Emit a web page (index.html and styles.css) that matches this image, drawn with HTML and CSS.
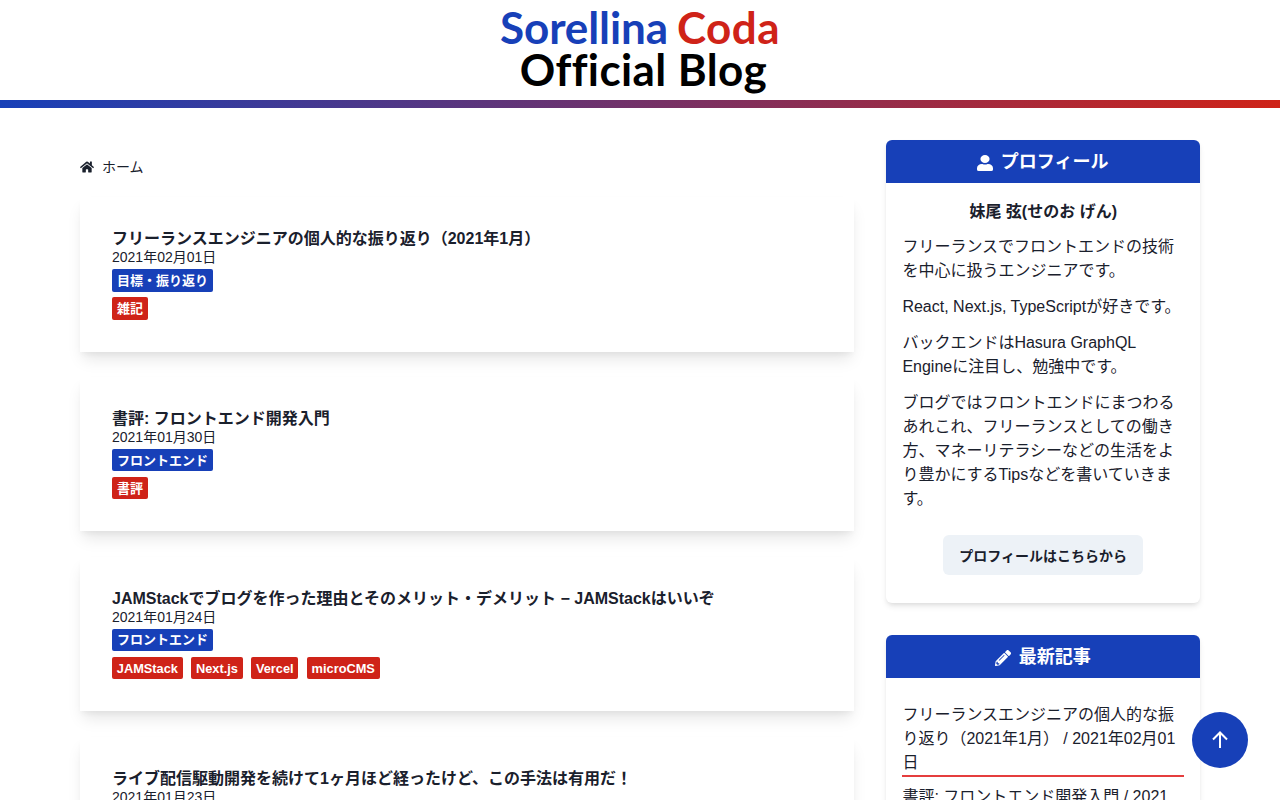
FILE: index.html
```html
<!DOCTYPE html>
<html lang="ja">
<head>
    <meta charset="UTF-8">
    <meta name="viewport" content="width=device-width, initial-scale=1.0">
    <title>Sorellina Coda Official Blog</title>
    <link rel="stylesheet" href="styles.css">
</head>
<body>
    <header class="site-header">
        <a class="logo" href="#">
            <span class="logo-top"><span class="logo-blue">Sorellina</span><span class="logo-red">Coda</span></span>
            <span class="logo-bottom">Official Blog</span>
        </a>
    </header>
    <div class="header-line"></div>

    <div class="wrapper">
        <main class="main">
            <nav class="breadcrumb">
                <svg class="icon-home" viewBox="0 0 576 512"><path d="M280.4 148.3L96 300.1V464a16 16 0 0 0 16 16l112-.3a16 16 0 0 0 15.9-16V368a16 16 0 0 1 16-16h64a16 16 0 0 1 16 16v95.6a16 16 0 0 0 16 16.1l112 .3a16 16 0 0 0 16-16V300L295.7 148.3a12.2 12.2 0 0 0-15.3 0zM571.6 251.5L488 182.6V44a12 12 0 0 0-12-12h-56a12 12 0 0 0-12 12v72.6L318.5 43a48 48 0 0 0-61 0L4.3 251.5a12 12 0 0 0-1.6 16.9l25.5 31A12 12 0 0 0 45.2 301l235.2-193.7a12.2 12.2 0 0 1 15.3 0L530.9 301a12 12 0 0 0 16.9-1.6l25.5-31a12 12 0 0 0-1.7-16.9z"/></svg>
                <span>ホーム</span>
            </nav>

            <article class="card">
                <h2>フリーランスエンジニアの個人的な振り返り（2021年1月）</h2>
                <div class="date">2021年02月01日</div>
                <div class="tags"><span class="tag tag-ja tag-blue">目標・振り返り</span></div>
                <div class="tags"><span class="tag tag-ja tag-red">雑記</span></div>
            </article>

            <article class="card">
                <h2>書評: フロントエンド開発入門</h2>
                <div class="date">2021年01月30日</div>
                <div class="tags"><span class="tag tag-ja tag-blue">フロントエンド</span></div>
                <div class="tags"><span class="tag tag-ja tag-red">書評</span></div>
            </article>

            <article class="card">
                <h2>JAMStackでブログを作った理由とそのメリット・デメリット − JAMStackはいいぞ</h2>
                <div class="date">2021年01月24日</div>
                <div class="tags"><span class="tag tag-ja tag-blue">フロントエンド</span></div>
                <div class="tags">
                    <span class="tag tag-red">JAMStack</span>
                    <span class="tag tag-red">Next.js</span>
                    <span class="tag tag-red">Vercel</span>
                    <span class="tag tag-red">microCMS</span>
                </div>
            </article>

            <article class="card">
                <h2>ライブ配信駆動開発を続けて1ヶ月ほど経ったけど、この手法は有用だ！</h2>
                <div class="date">2021年01月23日</div>
                <div class="tags"><span class="tag tag-ja tag-blue">フロントエンド</span></div>
            </article>
        </main>

        <aside class="sidebar">
            <section class="panel">
                <h3 class="panel-title">
                    <svg class="icon-title" viewBox="0 0 448 512" preserveAspectRatio="none"><path d="M224 256a128 128 0 1 0 0-256 128 128 0 0 0 0 256zm89.6 32h-16.7a174 174 0 0 1-145.8 0h-16.7A134.4 134.4 0 0 0 0 422.4V464a48 48 0 0 0 48 48h352a48 48 0 0 0 48-48v-41.6A134.4 134.4 0 0 0 313.6 288z"/></svg>
                    プロフィール
                </h3>
                <div class="panel-body">
                    <p class="profile-name">妹尾 弦(せのお げん)</p>
                    <p>フリーランスでフロントエンドの技術を中心に扱うエンジニアです。</p>
                    <p>React, Next.js, TypeScriptが好きです。</p>
                    <p>バックエンドはHasura GraphQL Engineに注目し、勉強中です。</p>
                    <p>ブログではフロントエンドにまつわるあれこれ、フリーランスとしての働き方、マネーリテラシーなどの生活をより豊かにするTipsなどを書いていきます。</p>
                    <div class="profile-action"><button type="button">プロフィールはこちらから</button></div>
                </div>
            </section>

            <section class="panel">
                <h3 class="panel-title">
                    <svg class="icon-title" viewBox="0 0 512 512"><path d="M497.9 142.1l-46.1 46.1a12 12 0 0 1-17 0l-111-111a12 12 0 0 1 0-17l46.1-46.1a48 48 0 0 1 67.9 0l60.1 60.1a47.9 47.9 0 0 1 0 67.9zM284.2 99.8L21.6 362.4.4 483.9a24 24 0 0 0 27.8 27.8l121.5-21.3 262.6-262.6a12 12 0 0 0 0-17l-111-111a12.1 12.1 0 0 0-17.1 0zM124.1 339.9a13.9 13.9 0 0 1 0-19.8l154-154a13.9 13.9 0 0 1 19.8 0 13.9 13.9 0 0 1 0 19.8l-154 154a13.9 13.9 0 0 1-19.8 0zM88 424h48v36.3l-64.5 11.3-31.1-31.1L51.7 376H88v48z"/></svg>
                    最新記事
                </h3>
                <ul class="recent">
                    <li>フリーランスエンジニアの個人的な振り返り（2021年1月） / 2021年02月01日</li>
                    <li>書評: フロントエンド開発入門 / 2021年01月30日</li>
                </ul>
            </section>
        </aside>
    </div>

    <button class="to-top" type="button" aria-label="ページトップへ">
        <svg viewBox="0 0 24 24"><path d="M12 20V5M5 11.5L12 4.500l7 7"/></svg>
    </button>
</body>
</html>
```

FILE: styles.css
```css
* {
    box-sizing: border-box;
}
html, body {
    height: 100%;
}
body {
    margin: 0;
    font-family: "Liberation Sans", "Noto Sans CJK JP", sans-serif;
    font-size: 16px;
    line-height: 1.5;
    color: #1a202c;
    background-color: #ffffff;
    text-rendering: optimizeLegibility;
    -webkit-font-smoothing: antialiased;
    overflow: hidden;
}
.site-header {
    height: 100px;
    display: flex;
    justify-content: center;
}
.logo {
    width: 280px;
    height: 100px;
    display: flex;
    flex-direction: column;
    overflow: hidden;
    color: #000000;
    text-decoration: none;
    font-family: "Lato", sans-serif;
    font-weight: 700;
    font-size: 44px;
    line-height: 42px;
    white-space: nowrap;
}
.logo-top {
    display: flex;
    gap: 9px;
    margin-top: 6px;
    letter-spacing: -0.1px;
}
.logo-blue {
    color: #1740b8;
}
.logo-red {
    color: #cf2318;
    letter-spacing: 0.5px;
}
.logo-bottom {
    align-self: center;
    margin-left: 7px;
    letter-spacing: 0.4px;
}
.header-line {
    height: 8px;
    background: linear-gradient(90deg, #1740b8, #cf2318);
}
.wrapper {
    display: flex;
    gap: 32px;
    width: 1120px;
    margin: 32px auto 0;
}
.main {
    width: 774.4px;
}
.sidebar {
    width: 313.6px;
}
.breadcrumb {
    display: flex;
    align-items: center;
    gap: 8px;
    height: 54px;
    margin-bottom: 3px;
    font-size: 14px;
}
.icon-home {
    width: 14px;
    height: 14px;
    fill: #1a202c;
}
.card {
    margin-bottom: 25.4px;
    padding: 32px;
    background-color: #ffffff;
    box-shadow: 0 10px 15px -3px rgba(0, 0, 0, 0.1), 0 4px 6px -2px rgba(0, 0, 0, 0.05);
}
.card h2 {
    margin: 0;
    font-size: 16px;
    line-height: 1.2;
    font-weight: 700;
}
.date {
    font-size: 14px;
    line-height: 19px;
}
.tags {
    display: flex;
    gap: 8.4px;
    margin-top: 5.6px;
}
.date + .tags {
    margin-top: 2px;
}
.tag {
    padding: 1.6px 4.8px;
    font-size: 12.8px;
    font-weight: 700;
    color: #ffffff;
    border-radius: 2px;
}
.tag-ja {
    padding: 1.45px 5px;
    font-size: 13px;
}
.tag-blue {
    background-color: #1740b8;
}
.tag-red {
    background-color: #cf2318;
}
.panel {
    margin-bottom: 32px;
    background-color: #ffffff;
    border-radius: 6px;
    box-shadow: 0 4px 6px -1px rgba(0, 0, 0, 0.1), 0 2px 4px -1px rgba(0, 0, 0, 0.06);
}
.panel-title {
    display: flex;
    justify-content: center;
    align-items: center;
    gap: 8px;
    height: 43px;
    margin: 0;
    padding: 2px 1px 0 0;
    font-size: 18px;
    font-weight: 700;
    color: #ffffff;
    background-color: #1740b8;
    border-radius: 6px 6px 0 0;
}
.icon-title {
    width: 16px;
    height: 16px;
    fill: #ffffff;
}
.panel-body {
    padding: 17px 16px 28px;
}
.panel-body p {
    margin: 0 0 12px;
}
.panel-body .profile-name {
    margin-bottom: 11px;
    text-align: center;
    font-weight: 700;
}
.profile-action {
    display: flex;
    justify-content: center;
    margin-top: 24px;
}
.profile-action button {
    height: 40px;
    padding: 0 16px;
    border: none;
    border-radius: 6px;
    background-color: #edf2f7;
    color: #1a202c;
    font-family: inherit;
    font-size: 14px;
    font-weight: 700;
}
.recent {
    list-style: none;
    margin: 0;
    padding: 25px 16px;
}
.recent li {
    margin-bottom: 8px;
    border-bottom: 2px solid #e53e3e;
}
.to-top {
    position: fixed;
    right: 32px;
    bottom: 32px;
    width: 56px;
    height: 56px;
    display: flex;
    justify-content: center;
    align-items: center;
    border: none;
    border-radius: 50%;
    background-color: #1740b8;
}
.to-top svg {
    width: 24px;
    height: 24px;
    fill: none;
    stroke: #ffffff;
    stroke-width: 2;
}
```
